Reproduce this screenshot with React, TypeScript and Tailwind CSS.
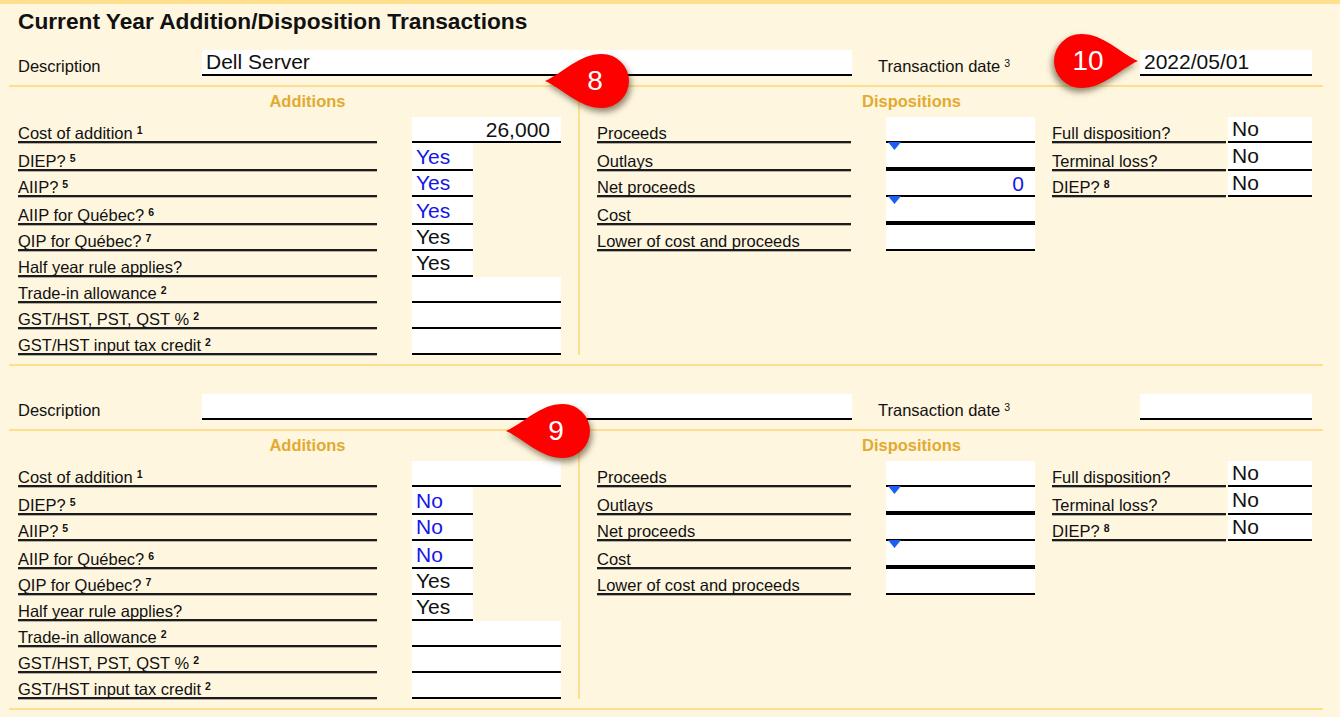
type Row = { label: string; sup?: string; value?: string; blue?: boolean; narrow?: boolean };

function Sup({ n, bold = true }: { n?: string; bold?: boolean }) {
  if (!n) return null;
  return <span className={`ml-[4px] align-[5px] text-[10.5px] ${bold ? "font-bold" : ""}`}>{n}</span>;
}

function Label({ label, sup, className }: { label: string; sup?: string; className: string }) {
  return (
    <div className={`flex items-end border-b-2 border-[#1c1c1c] shadow-[0_1px_0_#b5b0a4] ${className}`}>
      <span className="text-[16.5px] leading-[16px] whitespace-nowrap">
        {label}
        <Sup n={sup} />
      </span>
    </div>
  );
}

// rows are 26px tall, the 2nd and 4th are 28px
function rowHeight(i: number) {
  return i === 1 || i === 3 ? "h-[28px]" : "h-[26px]";
}

function Section({ desc, date, cost, net, flag }: { desc: string; date: string; cost: string; net: string; flag: string }) {
  const additions: Row[] = [
    { label: "Cost of addition", sup: "1", value: cost },
    { label: "DIEP?", sup: "5", value: flag, blue: true, narrow: true },
    { label: "AIIP?", sup: "5", value: flag, blue: true, narrow: true },
    { label: "AIIP for Québec?", sup: "6", value: flag, blue: true, narrow: true },
    { label: "QIP for Québec?", sup: "7", value: "Yes", narrow: true },
    { label: "Half year rule applies?", value: "Yes", narrow: true },
    { label: "Trade-in allowance", sup: "2" },
    { label: "GST/HST, PST, QST %", sup: "2" },
    { label: "GST/HST input tax credit", sup: "2" },
  ];
  const dispositions = ["Proceeds", "Outlays", "Net proceeds", "Cost", "Lower of cost and proceeds"];
  const flags: Row[] = [
    { label: "Full disposition?" },
    { label: "Terminal loss?" },
    { label: "DIEP?", sup: "8" },
  ];

  return (
    <div className="ml-[9px] w-[1314px] border-b-2 border-[#fddf8e]">
      {/* description row */}
      <div className="flex items-end h-[26px] pl-[9px]">
        <div className="w-[184px] text-[16.5px] leading-[18px] pb-[1px]">Description</div>
        <div className="w-[650px] h-full bg-white border-b-2 border-black pl-[4px] text-[21px] leading-[23px]">{desc}</div>
        <div className="w-[288px] pl-[26px] text-[16.5px] leading-[18px] pb-[1px] whitespace-nowrap">
          Transaction date
          <Sup n="3" bold={false} />
        </div>
        <div className="w-[172px] h-full bg-white border-b-2 border-black pl-[4px] text-[21px] leading-[23px]">{date}</div>
      </div>
      <div className="mt-[9px] border-b-2 border-[#fddf8e]" />

      <div className="flex pb-[9px]">
        {/* additions */}
        <div className="w-[571px] border-r-2 border-[#fddf8e]">
          <div className="h-[30px] pl-[28px] pt-[5px] text-center font-bold text-[16.5px] leading-[18px] text-[#e2aa2f]">Additions</div>
          {additions.map((r, i) => (
            <div key={r.label} className={`flex pl-[9px] ${rowHeight(i)}`}>
              <Label label={r.label} sup={r.sup} className="w-[359px]" />
              <div
                className={`ml-[35px] flex items-center bg-white border-b-2 border-black text-[21px] leading-none ${
                  r.narrow ? "w-[61px] pl-[4px]" : "w-[149px] justify-end pr-[11px]"
                } ${r.narrow && i !== 1 && i !== 3 ? "pb-[2px]" : ""} ${r.blue ? "text-[#1616e8]" : ""}`}
              >
                {r.value}
              </div>
            </div>
          ))}
        </div>

        {/* dispositions */}
        <div className="flex-1">
          <div className="h-[30px] pl-[282px] pt-[5px] font-bold text-[16.5px] leading-[18px] text-[#e2aa2f]">Dispositions</div>
          <div className="flex items-start">
            <div className="pl-[17px]">
              {dispositions.map((d, i) => (
                <div key={d} className={`flex ${rowHeight(i)}`}>
                  <Label label={d} className="w-[254px]" />
                  <div
                    className={`relative ml-[35px] w-[149px] flex items-center justify-end pr-[11px] bg-white border-black text-[21px] leading-none text-[#1616e8] ${
                      i % 2 === 1 ? "border-b-4" : "border-b-2"
                    }`}
                  >
                    {i === 2 ? net : ""}
                    {i % 2 === 1 && (
                      <svg className="absolute left-[2px] top-[-1px]" width="13" height="8" viewBox="0 0 13 8">
                        <path d="M0 0H13L6.5 8Z" fill="#1a5ff0" />
                      </svg>
                    )}
                  </div>
                </div>
              ))}
            </div>
            <div className="ml-[17px]">
              {flags.map((f, i) => (
                <div key={f.label} className={`flex ${rowHeight(i)}`}>
                  <Label label={f.label} sup={f.sup} className="w-[174px]" />
                  <div className="ml-[2px] w-[84px] flex items-center pl-[4px] pb-[2px] bg-white border-b-2 border-black text-[21px] leading-none">
                    No
                  </div>
                </div>
              ))}
            </div>
          </div>
        </div>
      </div>
    </div>
  );
}

function Callout({ n, flip, className }: { n: string; flip?: boolean; className: string }) {
  return (
    <div className={`absolute w-[84px] h-[54px] ${className}`}>
      <svg
        className={`absolute inset-0 overflow-visible drop-shadow-[2px_4px_3px_rgba(70,60,30,0.6)] ${flip ? "-scale-x-100" : ""}`}
        width="84"
        height="54"
        viewBox="0 0 84 54"
      >
        <path d="M0 27C18 19 34 0 57 0A27 27 0 0 1 57 54C34 54 18 35 0 27Z" fill="#fe0000" />
      </svg>
      <div className={`absolute top-0 h-full flex items-center justify-center text-white text-[28px] leading-none ${flip ? "left-[10px] w-[48px]" : "left-[26px] w-[48px]"}`}>
        {n}
      </div>
    </div>
  );
}

export default function App() {
  return (
    <div className="relative h-[717px] overflow-hidden bg-[#fff6e0] border-t-4 border-[#fddf8e] text-[#111] font-['Liberation_Sans',Arial,sans-serif]">
      <h1 className="h-[46px] pl-[18px] pt-[4px] text-[22.7px] leading-[26px] font-bold">Current Year Addition/Disposition Transactions</h1>
      <Section desc="Dell Server" date="2022/05/01" cost="26,000" net="0" flag="Yes" />
      <div className="h-[28px]" />
      <Section desc="" date="" cost="" net="" flag="No" />

      <Callout n="8" className="left-[545px] top-[50px]" />
      <Callout n="9" className="left-[506px] top-[400px]" />
      <Callout n="10" flip className="left-[1054px] top-[30px]" />
    </div>
  );
}
